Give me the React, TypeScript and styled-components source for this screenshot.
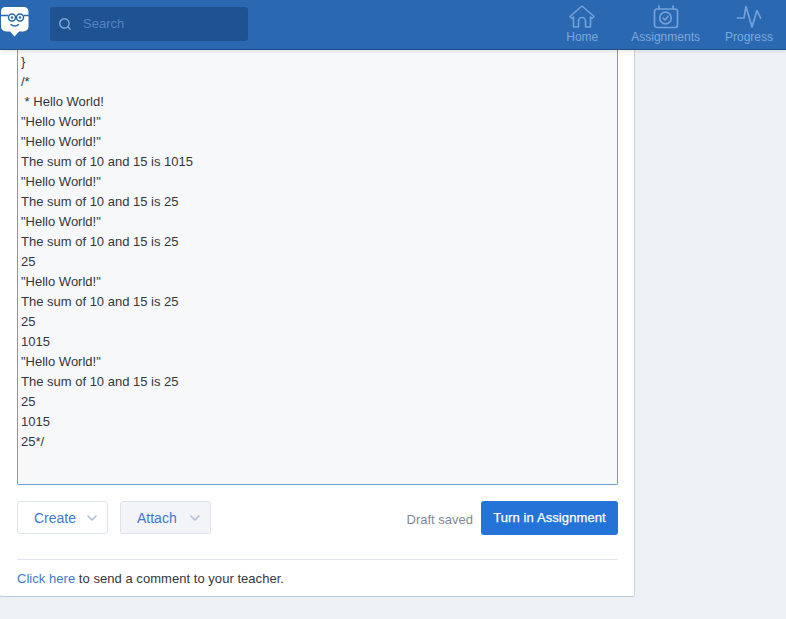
import { createGlobalStyle } from "styled-components";
import styled from "styled-components";
import { ChevronDown, Search } from "lucide-react";

const Global = createGlobalStyle`
  html, body {
    margin: 0;
    height: 100%;
    overflow: hidden;
    background: #edf0f5;
    font-family: "Liberation Sans", Arial, sans-serif;
    color: #30343a;
  }
`;

const TopBar = styled.header`
  position: relative;
  z-index: 2;
  box-sizing: border-box;
  height: 50px;
  display: flex;
  align-items: center;
  background: #2a68b1;
  border-bottom: 1px solid #1c4f8c;
  box-shadow: 0 1px 4px rgba(0, 0, 0, 0.12);
`;

const LogoLink = styled.a`
  width: 30px;
  height: 38px;
  align-self: flex-start;
  display: flex;
`;

const SearchBox = styled.div`
  width: 198px;
  height: 34px;
  margin: 0 0 2px 20px;
  display: flex;
  align-items: center;
  background: #1f5290;
  border-radius: 3px;
  color: #5585c0;
  font-size: 13px;
`;

const SearchIcon = styled.span`
  width: 25px;
  padding-left: 8px;
  display: flex;
  color: #7ea6d6;
`;

const Nav = styled.nav`
  margin-left: auto;
  align-self: flex-start;
  display: flex;
  align-items: flex-start;
  gap: 25px;
  padding: 5px 13px 0 0;
`;

const NavItem = styled.a`
  min-width: 48px;
  display: flex;
  flex-direction: column;
  align-items: center;
  color: #7ea8db;
  font-size: 12px;
  line-height: 14px;
  svg {
    display: block;
    margin-bottom: 1px;
    color: #74a1d9;
  }
`;

const Card = styled.main`
  box-sizing: border-box;
  width: 636px;
  height: 547px;
  margin-left: -1px;
  padding: 0 16px 0 17px;
  background: #fff;
  border-right: 1px solid #c8d3e2;
  border-bottom: 1px solid #bccadd;
  border-left: 1px solid #d4dde9;
  border-radius: 0 0 3px 3px;
`;

const Editor = styled.div`
  box-sizing: border-box;
  height: 435px;
  padding: 2px 3px 0;
  background: #f7f8fa;
  border: 1px solid #6c9ed8;
  border-top: none;
  border-radius: 0 0 2px 2px;
  font-size: 13px;
  line-height: 20px;
  color: #33373d;
`;

const Line = styled.div`
  white-space: pre;
`;

const Actions = styled.div`
  display: flex;
  align-items: flex-start;
  margin-top: 16px;
`;

const Menu = styled.button<{ $muted?: boolean }>`
  box-sizing: border-box;
  width: 91px;
  height: 33px;
  margin-right: 12px;
  padding: 0 7px 0 16px;
  display: flex;
  align-items: center;
  justify-content: space-between;
  background: ${(p) => (p.$muted ? "#f2f4f8" : "#fff")};
  border: 1px solid #dde4ed;
  border-radius: 3px;
  color: #3f78d0;
  font-family: inherit;
  font-size: 14px;
  svg {
    color: #b3c0d0;
  }
`;

const Saved = styled.span`
  margin-left: auto;
  margin-right: 8px;
  padding-top: 11px;
  color: #7f8994;
  font-size: 13px;
  line-height: 16px;
`;

const TurnIn = styled.button`
  box-sizing: border-box;
  width: 137px;
  height: 34px;
  padding: 0 0 2px;
  background: #2474d8;
  border: none;
  border-radius: 3px;
  color: #fff;
  font-family: inherit;
  font-size: 13px;
  letter-spacing: 0.1px;
  -webkit-text-stroke: 0.25px #fff;
`;

const Footer = styled.p`
  margin: 24px 0 0;
  padding-top: 10px;
  border-top: 1px solid #e1e6ec;
  font-size: 13px;
  line-height: 18px;
  letter-spacing: 0.04px;
  color: #33373d;
  a {
    color: #3f78d0;
  }
`;

const lines = [
  "}",
  "/*",
  " * Hello World!",
  '"Hello World!"',
  '"Hello World!"',
  "The sum of 10 and 15 is 1015",
  '"Hello World!"',
  "The sum of 10 and 15 is 25",
  '"Hello World!"',
  "The sum of 10 and 15 is 25",
  "25",
  '"Hello World!"',
  "The sum of 10 and 15 is 25",
  "25",
  "1015",
  '"Hello World!"',
  "The sum of 10 and 15 is 25",
  "25",
  "1015",
  "25*/",
];

function Logo() {
  return (
    <svg width="30" height="38" viewBox="0 0 30 38">
      <path
        d="M5 7h19a4.500 4.500 0 0 1 4.500 4.500v15a5 5 0 0 1-5 5H19l-4.500 5-4.500-5H6a5 5 0 0 1-5-5v-15A4.500 4.500 0 0 1 5 7z"
        fill="#fff"
      />
      <g fill="none" stroke="#2a68b1" strokeWidth="1.500">
        <circle cx="12" cy="17.500" r="3.500" />
        <circle cx="20" cy="17.500" r="3.500" />
        <path d="M1 15.500h7.500M23.500 15.500H29" />
        <path d="M11 24.500c2 2 5.500 2 7.500 0" strokeLinecap="round" />
      </g>
      <circle cx="12" cy="17.500" r="1.200" fill="#2a68b1" />
      <circle cx="20" cy="17.500" r="1.200" fill="#2a68b1" />
    </svg>
  );
}

function HomeIcon() {
  return (
    <svg width="26" height="24" viewBox="0 0 26 24" fill="none" stroke="currentColor" strokeWidth="1.600" strokeLinejoin="round">
      <path d="M1 11.500L13 1l12 10.500-2 2-1.500-1.500v10h-5v-6a3.500 3.500 0 0 0-7 0v6h-5V12L3 13.500z" />
    </svg>
  );
}

function AssignmentsIcon() {
  return (
    <svg width="26" height="24" viewBox="0 0 26 24" fill="none" stroke="currentColor" strokeWidth="1.700" strokeLinecap="round" strokeLinejoin="round">
      <rect x="1.500" y="4" width="23" height="18.500" rx="2.500" />
      <path d="M6 1v3M20 1v3" />
      <circle cx="12.500" cy="13" r="5.800" />
      <path d="M10 13l2 2 3-3.500" />
    </svg>
  );
}

function ProgressIcon() {
  return (
    <svg width="26" height="24" viewBox="0 0 26 24" fill="none" stroke="currentColor" strokeWidth="1.700" strokeLinecap="round" strokeLinejoin="round">
      <path d="M1.500 13H8L10 1.500 16 22l5-16.500L24.500 13" />
    </svg>
  );
}

export default function App() {
  return (
    <>
      <Global />
      <TopBar>
        <LogoLink>
          <Logo />
        </LogoLink>
        <SearchBox>
          <SearchIcon>
            <Search size={14} strokeWidth={2.500} />
          </SearchIcon>
          <span>Search</span>
        </SearchBox>
        <Nav>
          <NavItem>
            <HomeIcon />
            Home
          </NavItem>
          <NavItem>
            <AssignmentsIcon />
            Assignments
          </NavItem>
          <NavItem>
            <ProgressIcon />
            Progress
          </NavItem>
        </Nav>
      </TopBar>
      <Card>
        <Editor>
          {lines.map((text, i) => (
            <Line key={i}>{text}</Line>
          ))}
        </Editor>
        <Actions>
          <Menu>
            Create
            <ChevronDown size={16} strokeWidth={2.500} />
          </Menu>
          <Menu $muted>
            Attach
            <ChevronDown size={16} strokeWidth={2.500} />
          </Menu>
          <Saved>Draft saved</Saved>
          <TurnIn>Turn in Assignment</TurnIn>
        </Actions>
        <Footer>
          <a>Click here</a> to send a comment to your teacher.
        </Footer>
      </Card>
    </>
  );
}
